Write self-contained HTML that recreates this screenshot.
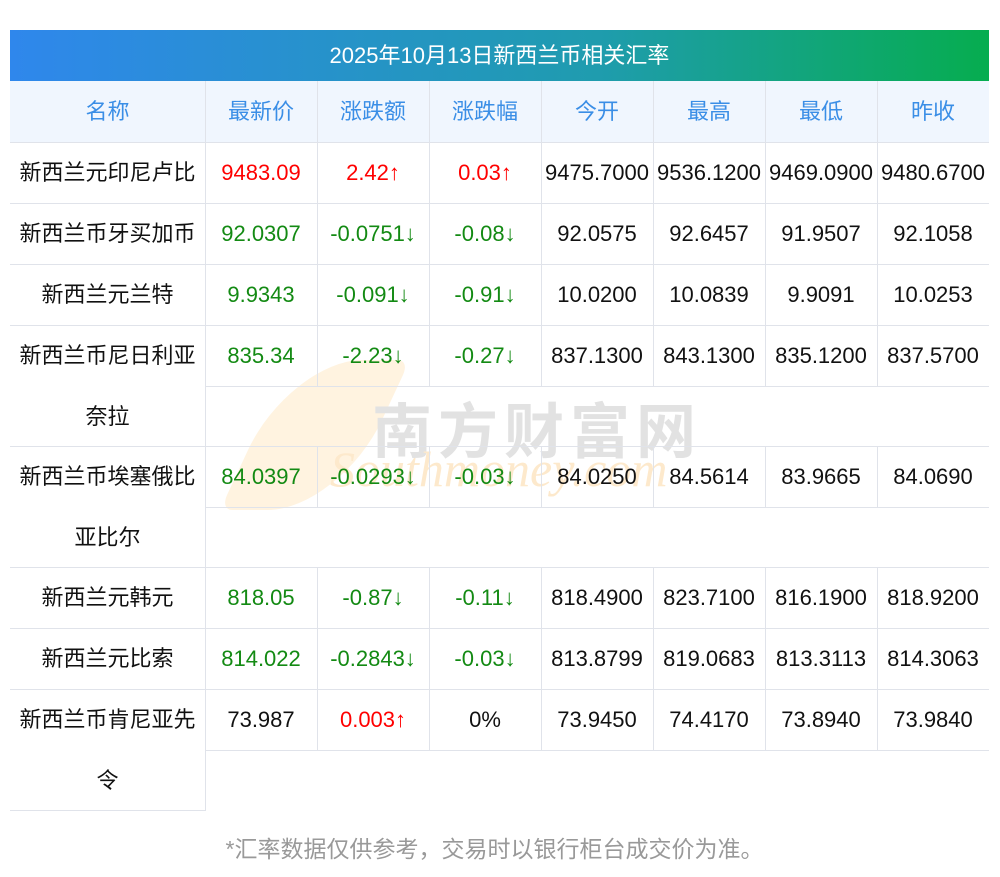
<!DOCTYPE html>
<html><head><meta charset="utf-8"><style>
body{margin:0;width:1000px;height:877px;background:#fff;position:relative;overflow:hidden;font-family:"Liberation Sans","Noto Sans CJK SC",sans-serif}
.a{position:absolute}
.title{left:10px;top:30px;width:979px;height:51px;background:linear-gradient(90deg,#2f87ec,#1f9cae 60%,#06ad4f);color:#fff;font-size:22px;line-height:51px;text-align:center}
.hd{left:10px;top:81px;width:979px;height:61px;background:#f0f6fe}
.c{position:absolute;height:61px;line-height:61px;text-align:center;font-size:22px;color:#111;white-space:nowrap}
.h{color:#3a8ee6}
.r{color:#f00}.g{color:#138a13}
.hl{position:absolute;height:1px;background:#e0e3ea}
.vl{position:absolute;width:1px;background:#e0e3ea}
.n{line-height:61px;white-space:normal}
</style></head><body>
<div class="a title">2025年10月13日新西兰币相关汇率</div>
<div class="a hd"></div>
<div class="a" style="left:255px;top:360px;width:120px;height:150px;border-radius:60% 10% 60% 10%;background:#fff3e0;transform:skewX(-25deg)"></div>
<div class="a" style="left:372px;top:384px;font-size:60px;color:#e2e2e2;letter-spacing:6px;font-weight:bold">南方财富网</div>
<div class="a" style="left:330px;top:440px;font-size:50px;color:#fde9cc;font-style:italic;font-family:'Liberation Serif',serif">Southmoney.com</div>
<div id="t"></div>
<div class="a" style="left:0;width:989px;top:830px;text-align:center;font-size:23px;color:#999">*汇率数据仅供参考，交易时以银行柜台成交价为准。</div>
<script>
const X=[10,205,317,429,541,653,765,877,989];
const hdr=["名称","最新价","涨跌额","涨跌幅","今开","最高","最低","昨收"];
const rows=[
[["新西兰元印尼卢比"],"9483.09|r","2.42↑|r","0.03↑|r","9475.7000","9536.1200","9469.0900","9480.6700"],
[["新西兰币牙买加币"],"92.0307|g","-0.0751↓|g","-0.08↓|g","92.0575","92.6457","91.9507","92.1058"],
[["新西兰元兰特"],"9.9343|g","-0.091↓|g","-0.91↓|g","10.0200","10.0839","9.9091","10.0253"],
[["新西兰币尼日利亚","奈拉"],"835.34|g","-2.23↓|g","-0.27↓|g","837.1300","843.1300","835.1200","837.5700"],
[["新西兰币埃塞俄比","亚比尔"],"84.0397|g","-0.0293↓|g","-0.03↓|g","84.0250","84.5614","83.9665","84.0690"],
[["新西兰元韩元"],"818.05|g","-0.87↓|g","-0.11↓|g","818.4900","823.7100","816.1900","818.9200"],
[["新西兰元比索"],"814.022|g","-0.2843↓|g","-0.03↓|g","813.8799","819.0683","813.3113","814.3063"],
[["新西兰币肯尼亚先","令"],"73.987","0.003↑|r","0%","73.9450","74.4170","73.8940","73.9840"]];
let h='';
hdr.forEach((t,i)=>{h+=`<div class="c h" style="left:${X[i]}px;top:81px;width:${X[i+1]-X[i]}px">${t}</div>`;if(i>0)h+=`<div class="vl" style="left:${X[i]}px;top:81px;height:61px"></div>`});
let y=142;
rows.forEach(r=>{const L=r[0].length,H=61*L-(L>1?1:0);
h+=`<div class="hl" style="left:10px;width:979px;top:${y}px"></div>`;
h+=`<div class="c n" style="left:10px;top:${y}px;width:195px;height:${H}px">${r[0].join('<br>')}</div>`;
h+=`<div class="vl" style="left:205px;top:${y}px;height:${H}px"></div>`;
for(let i=1;i<8;i++){const [v,c]=r[i].split('|');h+=`<div class="c ${c||''}" style="left:${X[i]}px;top:${y}px;width:${X[i+1]-X[i]}px">${v}</div>`;if(i>1)h+=`<div class="vl" style="left:${X[i]}px;top:${y}px;height:61px"></div>`}
if(L>1)h+=`<div class="hl" style="left:205px;width:784px;top:${y+61}px"></div>`;
y+=H;});
h+=`<div class="hl" style="left:10px;width:196px;top:${y}px"></div>`;
document.getElementById('t').innerHTML=h;
</script>
</body></html>
